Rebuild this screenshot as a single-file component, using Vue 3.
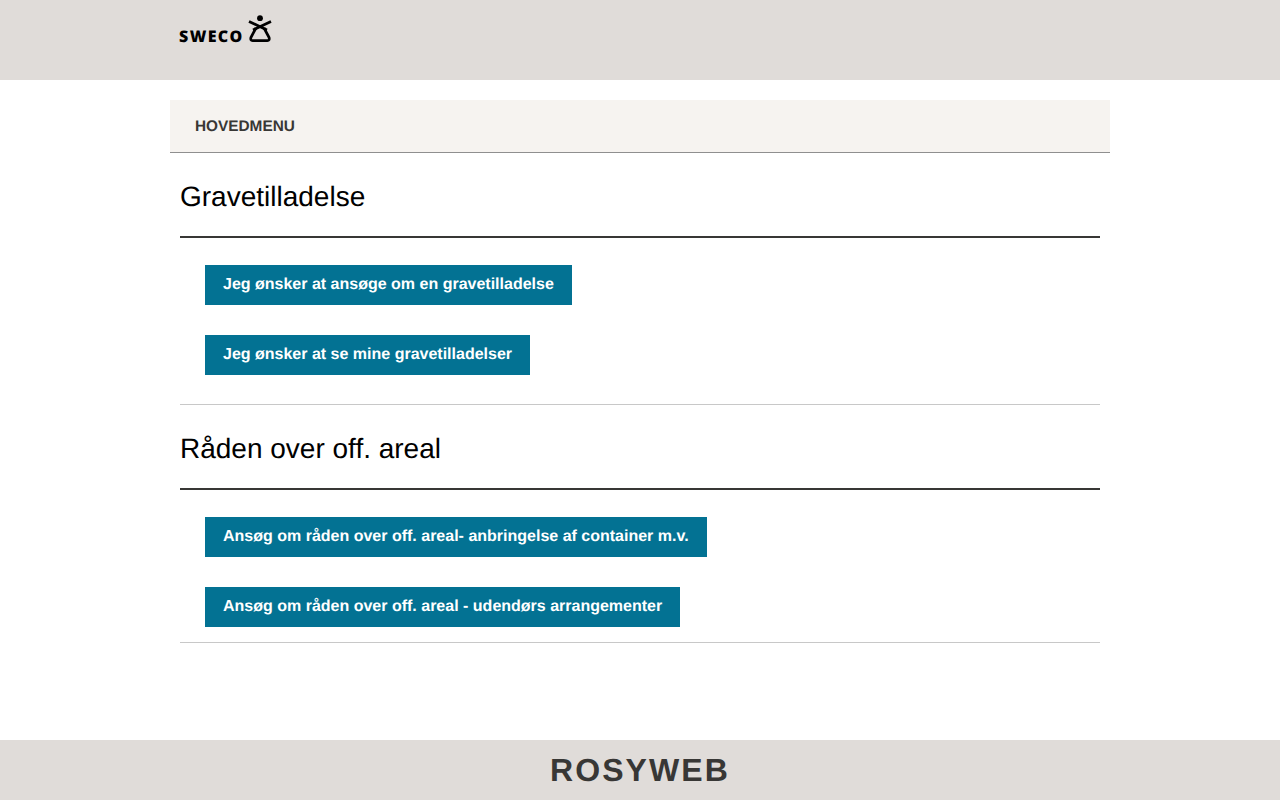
<script setup>
const sections = [
  { title: 'Gravetilladelse', cls: 'first', links: ['Jeg ønsker at ansøge om en gravetilladelse', 'Jeg ønsker at se mine gravetilladelser'] },
  { title: 'Råden over off. areal', cls: 'second', links: ['Ansøg om råden over off. areal- anbringelse af container m.v.', 'Ansøg om råden over off. areal - udendørs arrangementer'] },
]
</script>

<template>
  <div class="page">
    <header class="top">
      <div class="wrap">
        <div class="logo">
          <span class="logo-text">SWECO</span>
          <svg class="logo-mark" width="24" height="28" viewBox="0 0 24 28">
            <circle cx="12" cy="3.2" r="2.9" fill="#000" />
            <path d="M1 6.5 L19 15 M23 6.5 L5 15" fill="none" stroke="#000" stroke-width="2.7" />
            <path d="M8 13 L2.9 22.5 Q2.2 25.6 4.6 25.6 H19.4 Q21.8 25.6 21.1 22.5 L16 13" fill="none" stroke="#000" stroke-width="2.7" />
          </svg>
        </div>
      </div>
    </header>
    <main class="wrap main">
      <nav class="menu">HOVEDMENU</nav>
      <section v-for="s in sections" :key="s.title" class="section" :class="s.cls">
        <h2 class="title">{{ s.title }}</h2>
        <ul class="links">
          <li v-for="l in s.links" :key="l"><a class="btn">{{ l }}</a></li>
        </ul>
      </section>
    </main>
    <footer class="foot">ROSYWEB</footer>
  </div>
</template>

<style>
html, body { margin: 0; background: #fff; }
</style>

<style scoped>
.page {
  height: 800px;
  display: flex;
  flex-direction: column;
  font-family: "Liberation Sans", Arial, sans-serif;
  text-rendering: geometricPrecision;
  overflow: hidden;
}
.top { height: 80px; background: #e0dcd9; flex: none; }
.wrap { width: 940px; margin: 0 auto; }
.logo { display: flex; align-items: flex-end; padding: 15px 0 0 9px; height: 28px; gap: 5px; }
.logo-text {
  font-family: "Open Sans", sans-serif;
  font-weight: 800;
  font-size: 16px;
  line-height: 16px;
  letter-spacing: 1.4px;
  color: #000;
  margin-bottom: -1px;
}
.logo-mark { display: block; margin-left: -1px; }
.main { flex: 1; padding-top: 20px; }
.menu {
  height: 52px;
  line-height: 53px;
  padding-left: 25px;
  background: #f6f3f0;
  border-bottom: 1px solid #8f8f8f;
  font-size: 15.36px;
  font-weight: 700;
  color: #383735;
}
.section { margin: 0 10px; border-bottom: 1px solid #c8c8c8; }
.title {
  margin: 0;
  height: 83px;
  line-height: 88px;
  font-size: 28px;
  font-weight: 400;
  color: #000;
  border-bottom: 2px solid #383735;
}
.links { list-style: none; margin: 0; padding: 27px 0 0 25px; }
.links li { margin-bottom: 30px; display: flex; }
.section.second .links li:last-child { margin-bottom: 15px; }
.section.first .links li:last-child { margin-bottom: 29px; }
.btn {
  display: block;
  height: 40px;
  line-height: 39px;
  padding: 0 18px;
  background: #037293;
  color: #fff;
  font-size: 16px;
  font-weight: 700;
}
.foot {
  height: 60px;
  flex: none;
  background: #e0dcd9;
  text-align: center;
  line-height: 60px;
  font-size: 32px;
  font-weight: 700;
  letter-spacing: 2.1px;
  color: #383735;
}
</style>
